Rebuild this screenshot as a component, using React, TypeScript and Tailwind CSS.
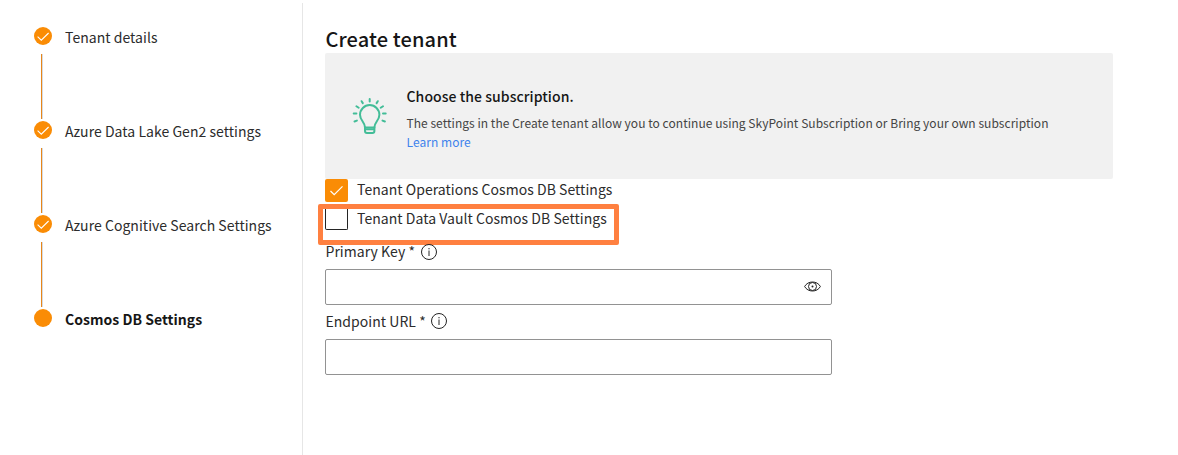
import React from "react";

const steps = [
  { label: "Tenant details", done: true },
  { label: "Azure Data Lake Gen2 settings", done: true },
  { label: "Azure Cognitive Search Settings", done: true },
  { label: "Cosmos DB Settings", done: false },
];

function StepDot({ done }: { done: boolean }) {
  return (
    <svg className="block h-[18px] w-[18px] shrink-0" viewBox="0 0 18 18" fill="none">
      <circle cx="9" cy="9" r="9" fill="#fa8c05" />
      {done && <path d="M3.6 9.6 7.3 13.2 14.6 6" stroke="#fff" strokeWidth="1.1" />}
    </svg>
  );
}

function InfoIcon() {
  return (
    <svg className="block h-4 w-4 shrink-0" viewBox="0 0 16 16" fill="none">
      <circle cx="8" cy="8" r="7.5" stroke="#242424" strokeWidth="1" />
      <path d="M8 6.500v5.500M8 4v1.300" stroke="#242424" strokeWidth="1" />
    </svg>
  );
}

function EyeIcon() {
  return (
    <svg className="block h-[11px] w-[17px]" viewBox="0 0 17 11" fill="none" stroke="#242424">
      <path d="M.6 5.5C2.3 2.5 5.2 1 8.5 1s6.200 1.500 7.900 4.500C14.700 8.500 11.800 10 8.500 10S2.300 8.500.6 5.500Z" />
      <circle cx="8.500" cy="5.500" r="4" />
      <circle cx="8.500" cy="5.500" r="1" fill="#242424" stroke="none" />
    </svg>
  );
}

function BulbIcon() {
  return (
    <svg className="block h-[38px] w-[36px]" viewBox="0 0 36 38" fill="none" stroke="#43bd98" strokeWidth="2" strokeLinecap="round" strokeLinejoin="round">
      <path d="M13 30.500C13 25 8 23.500 8 17.800a9.700 9.700 0 0 1 19.400 0c0 5.700-5 7.200-5 12.700Z" />
      <path d="M13 30.500v3.500q0 2 2 2h5.400q2 0 2-2v-3.500M13.500 32.200h8.400" />
      <path d="M17.700 2v2.400M9.600 4.200l1.200 1.900M25.800 4.200l-1.200 1.900M4.400 9.200l2.300 1.600M31 9.200l-2.300 1.600M1.700 16.500h2.700M33.700 16.500h-2.700M2.500 24.500l2.400-.9M32.900 24.500l-2.400-.9" />
    </svg>
  );
}

function Field({ label, secret = false }: { label: string; secret?: boolean }) {
  return (
    <div className="flex h-[70px] w-[507px] flex-col">
      <div className="flex h-[34px] items-start gap-[5.5px] pl-[0.5px]">
        <span className="h-[34px] text-[14px] leading-[32px]">{label} *</span>
        <span className={secret ? "pt-[9px]" : "pt-2"}><InfoIcon /></span>
      </div>
      <div className="flex h-9 items-center justify-end rounded-xs border border-[#929292] pb-px pr-[10px]">
        {secret && <EyeIcon />}
      </div>
    </div>
  );
}

export default function App() {
  return (
    <div className="flex h-[455px] w-[1178px] overflow-hidden bg-white pt-[3px] font-['Noto_Sans_CJK_SC','Noto_Sans',sans-serif] tracking-[0.04px] text-[#2c2c2c]">
      <nav className="flex w-[303px] shrink-0 flex-col border-r border-[#e6e6e6] pl-[34px] pt-6">
        {steps.map((step, i) => (
          <div key={step.label} className="flex h-[94px] shrink-0 gap-[13px]">
            <div className="flex w-[18px] flex-col">
              <StepDot done={step.done} />
              {i < steps.length - 1 && (
                <span className="ml-[7px] mt-[9px] h-[65px] w-[2px] border-l border-r border-l-[#e8871a] border-r-[#d6dbe2]" />
              )}
            </div>
            <span className={step.done ? "h-5 whitespace-nowrap text-[14px] leading-[20px]" : "h-5 whitespace-nowrap text-[14px] font-bold leading-[20px] text-[#161616]"}>
              {step.label}
            </span>
          </div>
        ))}
      </nav>

      <main className="flex flex-1 flex-col pl-[22px]">
        <h1 className="h-[50px] shrink-0 pl-[0.5px] pt-[22px] text-[20px] font-medium leading-[28px] tracking-[0.12px] text-[#161616]">Create tenant</h1>
        <section className="flex h-[126px] w-[788px] shrink-0 rounded-[2px] bg-[#f1f1f1] pl-[27px]">
          <div className="w-[54.500px] pt-[44px]"><BulbIcon /></div>
          <div className="flex flex-col whitespace-nowrap pt-[32px]">
            <h2 className="text-[14px] font-medium leading-[22px] tracking-[0.07px] text-[#161616]">Choose the subscription.</h2>
            <p className="mt-[6px] text-[12px] leading-[19px] text-[#444]">
              The settings in the Create tenant allow you to continue using SkyPoint Subscription or Bring your own subscription
            </p>
            <a className="text-[12px] leading-[19px] text-[#3f83ec]">Learn more</a>
          </div>
        </section>

        <div className="flex h-[25px] shrink-0 gap-[9px]">
          <span className="flex h-[23px] w-[23px] items-center justify-center rounded-[2px] bg-[#fa8c05]">
            <svg className="h-[11px] w-[13px]" viewBox="0 0 13 11" fill="none" stroke="#fff" strokeWidth="1.2">
              <path d="m.5 6 3.700 3.700L12.500 1.300" />
            </svg>
          </span>
          <span className="text-[14px] leading-[20px]">Tenant Operations Cosmos DB Settings</span>
        </div>
        <div className="-ml-[7px] flex h-[41px] w-[301px] shrink-0 gap-[9px] rounded-[2px] border-5 border-[#ff8040] pl-[2px]">
          <span className="h-[21px] w-[23px] rounded-b-[2px] border border-t-0 border-[#242424]" />
          <span className="whitespace-nowrap text-[14px] leading-[18px]">Tenant Data Vault Cosmos DB Settings</span>
        </div>

        <div className="-mt-[10px]">
          <Field label="Primary Key" secret />
          <Field label="Endpoint URL" />
        </div>
      </main>
    </div>
  );
}
